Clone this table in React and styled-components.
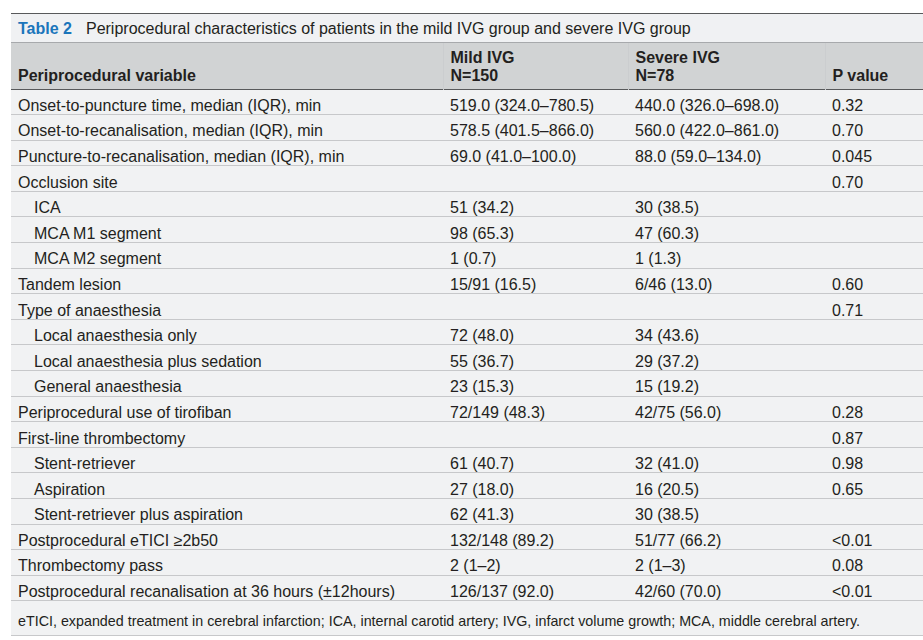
import React from "react";
import styled, { createGlobalStyle } from "styled-components";

const Global = createGlobalStyle`
  html, body { margin: 0; padding: 0; background: #ffffff; }
  body { font-family: "Liberation Sans", Arial, Helvetica, sans-serif; color: #231f20; }
`;

const Page = styled.div`
  padding: 13px 0 0 11px;
  width: 912px;
  overflow: hidden;
`;

const Caption = styled.div`
  border-top: 1.5px solid #58595b;
  border-bottom: 1px solid #a7a9ac;
  background: #f0f1f3;
  height: 30px;
  display: flex;
  align-items: center;
  padding: 1px 0 0 7px;
  font-size: 16px;
  box-sizing: border-box;
  white-space: nowrap;
`;

const Label = styled.span`
  color: #1b75bb;
  font-weight: 700;
  margin-right: 14px;
`;

const Table = styled.table`
  width: 912px;
  border-collapse: collapse;
  table-layout: fixed;
  font-size: 16px;
`;

const HeadRow = styled.tr`
  background: #d1d3d4;
  height: 46px;
  border-bottom: 1.5px solid #58595b;
`;

const Th = styled.th`
  text-align: left;
  vertical-align: bottom;
  font-weight: 700;
  line-height: 18px;
  padding: 4px 7px 4px;
  border-left: ${(p) => (p.$first ? "none" : "1px solid #cbcdcf")};
`;

const Row = styled.tr`
  background: #f1f2f3;
  height: 25.6px;
  border-bottom: 1px solid #c7c8ca;
`;

const Td = styled.td`
  padding: 8px 0 0 ${(p) => (p.$indent ? 23 : 7)}px;
  line-height: 16px;
  vertical-align: middle;
  white-space: nowrap;
`;

const FootRow = styled.tr`
  background: #f1f2f3;
  height: 35px;
  border-bottom: 1px solid #c7c8ca;
`;

const FootCell = styled.td`
  padding: 5px 7px 0;
  font-size: 14.3px;
  vertical-align: middle;
  white-space: nowrap;
`;

const rows = [
  ["Onset-to-puncture time, median (IQR), min", "519.0 (324.0\u2013780.5)", "440.0 (326.0\u2013698.0)", "0.32"],
  ["Onset-to-recanalisation, median (IQR), min", "578.5 (401.5\u2013866.0)", "560.0 (422.0\u2013861.0)", "0.70"],
  ["Puncture-to-recanalisation, median (IQR), min", "69.0 (41.0\u2013100.0)", "88.0 (59.0\u2013134.0)", "0.045"],
  ["Occlusion site", "", "", "0.70"],
  ["ICA", "51 (34.2)", "30 (38.5)", "", true],
  ["MCA M1 segment", "98 (65.3)", "47 (60.3)", "", true],
  ["MCA M2 segment", "1 (0.7)", "1 (1.3)", "", true],
  ["Tandem lesion", "15/91 (16.5)", "6/46 (13.0)", "0.60"],
  ["Type of anaesthesia", "", "", "0.71"],
  ["Local anaesthesia only", "72 (48.0)", "34 (43.6)", "", true],
  ["Local anaesthesia plus sedation", "55 (36.7)", "29 (37.2)", "", true],
  ["General anaesthesia", "23 (15.3)", "15 (19.2)", "", true],
  ["Periprocedural use of tirofiban", "72/149 (48.3)", "42/75 (56.0)", "0.28"],
  ["First-line thrombectomy", "", "", "0.87"],
  ["Stent-retriever", "61 (40.7)", "32 (41.0)", "0.98", true],
  ["Aspiration", "27 (18.0)", "16 (20.5)", "0.65", true],
  ["Stent-retriever plus aspiration", "62 (41.3)", "30 (38.5)", "", true],
  ["Postprocedural eTICI \u22652b50", "132/148 (89.2)", "51/77 (66.2)", "<0.01"],
  ["Thrombectomy pass", "2 (1\u20132)", "2 (1\u20133)", "0.08"],
  ["Postprocedural recanalisation at 36 hours (\u00b112hours)", "126/137 (92.0)", "42/60 (70.0)", "<0.01"],
];

export default function App() {
  return (
    <Page>
      <Global />
      <Caption>
        <Label>Table 2</Label>
        Periprocedural characteristics of patients in the mild IVG group and severe IVG group
      </Caption>
      <Table>
        <colgroup>
          <col style={{ width: 432 }} />
          <col style={{ width: 185 }} />
          <col style={{ width: 197 }} />
          <col style={{ width: 98 }} />
        </colgroup>
        <thead>
          <HeadRow>
            <Th $first>Periprocedural variable</Th>
            <Th>
              Mild IVG
              <br />
              N=150
            </Th>
            <Th>
              Severe IVG
              <br />
              N=78
            </Th>
            <Th>P value</Th>
          </HeadRow>
        </thead>
        <tbody>
          {rows.map((r, i) => (
            <Row key={i}>
              <Td $indent={r[4]}>{r[0]}</Td>
              <Td>{r[1]}</Td>
              <Td>{r[2]}</Td>
              <Td>{r[3]}</Td>
            </Row>
          ))}
          <FootRow>
            <FootCell colSpan={4}>
              eTICI, expanded treatment in cerebral infarction; ICA, internal carotid artery; IVG, infarct volume growth; MCA, middle cerebral artery.
            </FootCell>
          </FootRow>
        </tbody>
      </Table>
    </Page>
  );
}
